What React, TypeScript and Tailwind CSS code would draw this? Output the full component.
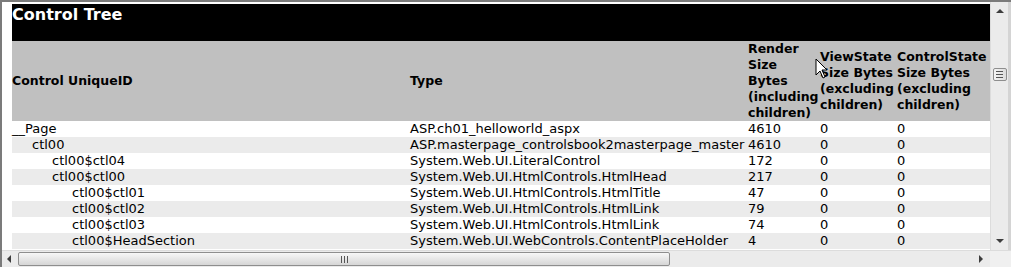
const rows = [
  { id: "__Page", level: 0, type: "ASP.ch01_helloworld_aspx", render: "4610" },
  { id: "ctl00", level: 1, type: "ASP.masterpage_controlsbook2masterpage_master", render: "4610" },
  { id: "ctl00$ctl04", level: 2, type: "System.Web.UI.LiteralControl", render: "172" },
  { id: "ctl00$ctl00", level: 2, type: "System.Web.UI.HtmlControls.HtmlHead", render: "217" },
  { id: "ctl00$ctl01", level: 3, type: "System.Web.UI.HtmlControls.HtmlTitle", render: "47" },
  { id: "ctl00$ctl02", level: 3, type: "System.Web.UI.HtmlControls.HtmlLink", render: "79" },
  { id: "ctl00$ctl03", level: 3, type: "System.Web.UI.HtmlControls.HtmlLink", render: "74" },
  { id: "ctl00$HeadSection", level: 3, type: "System.Web.UI.WebControls.ContentPlaceHolder", render: "4" },
];

const indent = ["pl-0", "pl-[20px]", "pl-[40px]", "pl-[60px]"];

function Arrow({ dir }: { dir: "up" | "down" | "left" | "right" }) {
  const pts = {
    up: "1,6 5,2 9,6",
    down: "1,2 5,6 9,2",
    left: "6,1 2,5 6,9",
    right: "2,1 6,5 2,9",
  }[dir];
  return (
    <svg width="10" height="10" viewBox="0 0 10 10">
      <polygon points={pts} fill="#3c3c3c" />
    </svg>
  );
}

export default function App() {
  return (
    <div className="relative w-[1011px] h-[267px] overflow-hidden bg-[#f0f0f0] border-t-[2px] border-l-[2px] border-[#7b7b7b] flex flex-col font-['DejaVu_Sans',Verdana,sans-serif] text-black">
      <div className="flex flex-1 min-h-0">
        {/* page content */}
        <div className="w-[988px] bg-white pl-[10px] pt-[2px] overflow-hidden">
          <div className="w-[978px] h-[37px] bg-black text-white font-bold text-[16px] leading-[20px] pt-[1px]">
            Control Tree
          </div>

          {/* header */}
          <div className="grid grid-cols-[398px_338px_72px_77px_93px] bg-[#c0c0c0] h-[80px] items-center text-[12.5px] font-bold leading-[16px]">
            <div>Control UniqueID</div>
            <div>Type</div>
            <div className="whitespace-nowrap">Render<br />Size<br />Bytes<br />(including<br />children)</div>
            <div className="whitespace-nowrap">ViewState<br />Size Bytes<br />(excluding<br />children)</div>
            <div className="whitespace-nowrap">ControlState<br />Size Bytes<br />(excluding<br />children)</div>
          </div>

          {/* rows */}
          {rows.map((r, i) => (
            <div
              key={i}
              className={`grid grid-cols-[398px_338px_72px_77px_93px] h-[16px] text-[13px] leading-[16px] whitespace-nowrap ${i % 2 === 1 ? "bg-[#ebebeb]" : "bg-white"}`}
            >
              <div className={indent[r.level]}>{r.id}</div>
              <div>{r.type}</div>
              <div>{r.render}</div>
              <div>0</div>
              <div>0</div>
            </div>
          ))}
        </div>

        {/* vertical scrollbar */}
        <div className="w-[18px] bg-[#ebebeb] border-l border-[#dcdcdc] flex flex-col items-center">
          <div className="h-[17px] flex items-center justify-center mt-[1px]">
            <Arrow dir="up" />
          </div>
          <div className="mt-[48px] w-[14px] h-[13px] rounded-[2px] border border-[#8e8e8e] bg-gradient-to-r from-[#f4f4f4] to-[#dcdcdc] flex flex-col items-center justify-center gap-[2px]">
            <div className="w-[7px] h-px bg-[#555]" />
            <div className="w-[7px] h-px bg-[#555]" />
            <div className="w-[7px] h-px bg-[#555]" />
          </div>
          <div className="flex-1" />
          <div className="h-[17px] flex items-center justify-center">
            <Arrow dir="down" />
          </div>
        </div>
        <div className="w-[3px] bg-[#d4d4d4]" />
      </div>

      {/* horizontal scrollbar */}
      <div className="h-[17px] flex bg-[#ebebeb] border-t border-[#dcdcdc]">
        <div className="w-[16px] flex items-center justify-center">
          <Arrow dir="left" />
        </div>
        <div className="w-[652px] my-[1px] rounded-[2px] border border-[#8e8e8e] bg-gradient-to-b from-[#f7f7f7] to-[#d6d6d6] flex items-center justify-center gap-[2px]">
          <div className="w-px h-[7px] bg-[#555]" />
          <div className="w-px h-[7px] bg-[#555]" />
          <div className="w-px h-[7px] bg-[#555]" />
        </div>
        <div className="flex-1" />
        <div className="w-[16px] flex items-center justify-center">
          <Arrow dir="right" />
        </div>
        <div className="w-[21px] bg-[#f0f0f0]" />
      </div>

      {/* mouse cursor */}
      <svg className="absolute left-[813px] top-[56px]" width="14" height="22" viewBox="0 0 14 22">
        <path d="M1 1 L1 17 L5 13 L8 20 L10 19 L7 12 L12 12 Z" fill="#fff" stroke="#000" strokeWidth="1" />
      </svg>
    </div>
  );
}
